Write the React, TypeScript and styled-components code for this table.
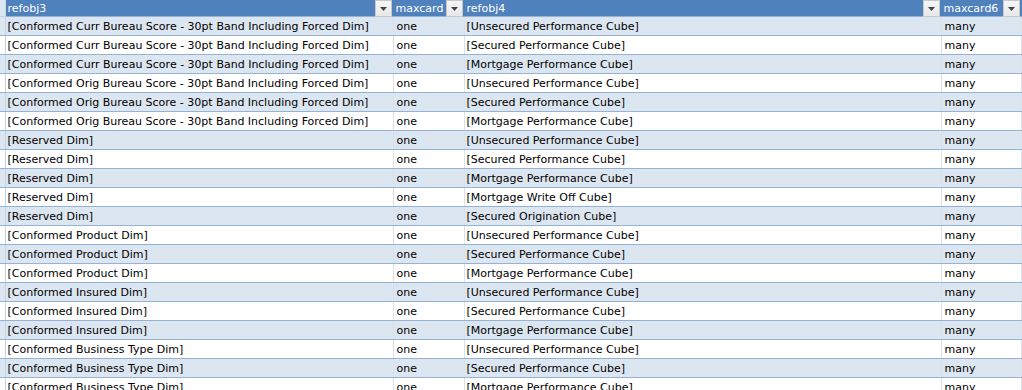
import styled, { createGlobalStyle } from 'styled-components';

const GlobalStyle = createGlobalStyle`
  html, body {
    margin: 0;
    padding: 0;
    background: #ffffff;
    overflow: hidden;
  }
`;

const rows: [string, string, string, string][] = [
  ['[Conformed Curr Bureau Score - 30pt Band Including Forced Dim]', 'one', '[Unsecured Performance Cube]', 'many'],
  ['[Conformed Curr Bureau Score - 30pt Band Including Forced Dim]', 'one', '[Secured Performance Cube]', 'many'],
  ['[Conformed Curr Bureau Score - 30pt Band Including Forced Dim]', 'one', '[Mortgage Performance Cube]', 'many'],
  ['[Conformed Orig Bureau Score - 30pt Band Including Forced Dim]', 'one', '[Unsecured Performance Cube]', 'many'],
  ['[Conformed Orig Bureau Score - 30pt Band Including Forced Dim]', 'one', '[Secured Performance Cube]', 'many'],
  ['[Conformed Orig Bureau Score - 30pt Band Including Forced Dim]', 'one', '[Mortgage Performance Cube]', 'many'],
  ['[Reserved Dim]', 'one', '[Unsecured Performance Cube]', 'many'],
  ['[Reserved Dim]', 'one', '[Secured Performance Cube]', 'many'],
  ['[Reserved Dim]', 'one', '[Mortgage Performance Cube]', 'many'],
  ['[Reserved Dim]', 'one', '[Mortgage Write Off Cube]', 'many'],
  ['[Reserved Dim]', 'one', '[Secured Origination Cube]', 'many'],
  ['[Conformed Product Dim]', 'one', '[Unsecured Performance Cube]', 'many'],
  ['[Conformed Product Dim]', 'one', '[Secured Performance Cube]', 'many'],
  ['[Conformed Product Dim]', 'one', '[Mortgage Performance Cube]', 'many'],
  ['[Conformed Insured Dim]', 'one', '[Unsecured Performance Cube]', 'many'],
  ['[Conformed Insured Dim]', 'one', '[Secured Performance Cube]', 'many'],
  ['[Conformed Insured Dim]', 'one', '[Mortgage Performance Cube]', 'many'],
  ['[Conformed Business Type Dim]', 'one', '[Unsecured Performance Cube]', 'many'],
  ['[Conformed Business Type Dim]', 'one', '[Secured Performance Cube]', 'many'],
  ['[Conformed Business Type Dim]', 'one', '[Mortgage Performance Cube]', 'many'],
];

const headers = ['refobj3', 'maxcard', 'refobj4', 'maxcard6'];
const widths = [388, 71, 477, 80];

export default function App() {
  return (
    <>
      <GlobalStyle />
      <Sheet>
        <colgroup>
          <col style={{ width: 5 }} />
          {widths.map((w, i) => (
            <col key={i} style={{ width: w }} />
          ))}
          <col />
        </colgroup>
        <thead>
          <tr>
            <Stub $header />
            {headers.map((h) => (
              <HeaderCell key={h}>
                <HeaderInner>
                  <HeaderText>{h}</HeaderText>
                  <FilterButton>
                    <svg width="7" height="4" viewBox="0 0 7 4">
                      <path d="M0 0H7L3.5 4Z" fill="#444" />
                    </svg>
                  </FilterButton>
                </HeaderInner>
              </HeaderCell>
            ))}
            <Stub $header />
          </tr>
        </thead>
        <tbody>
          {rows.map((r, i) => (
            <tr key={i}>
              <Stub $band={i % 2 === 0} />
              {r.map((c, j) => (
                <Cell key={j} $band={i % 2 === 0}>{c}</Cell>
              ))}
              <Stub $band={i % 2 === 0} />
            </tr>
          ))}
        </tbody>
      </Sheet>
    </>
  );
}

const Sheet = styled.table`
  border-collapse: collapse;
  table-layout: fixed;
  width: 1022px;
  font-family: 'DejaVu Sans', sans-serif;
  font-size: 11px;
  color: #000;
`;

const Stub = styled.td<{ $band?: boolean; $header?: boolean }>`
  padding: 0;
  height: ${(p) => (p.$header ? '16px' : '18px')};
  background: ${(p) => (p.$header ? '#dce6f1' : p.$band ? '#dce6f1' : '#ffffff')};
  border-right: 1px solid #c5d2e2;
  border-bottom: 1px solid ${(p) => (p.$header ? '#c5d2e2' : '#95b3d7')};
  &:last-child {
    border-right: none;
  }
`;

const HeaderCell = styled.th`
  padding: 0;
  height: 16px;
  background: #4f81bd;
  border-right: 1px solid #4f81bd;
  border-bottom: 1px solid #95b3d7;
  text-align: left;
  font-weight: normal;
`;

const HeaderInner = styled.div`
  display: flex;
  align-items: flex-start;
  justify-content: space-between;
  height: 16px;
`;

const HeaderText = styled.span`
  color: #ffffff;
  padding: 1px 0 0 2px;
  line-height: 15px;
  white-space: nowrap;
`;

const FilterButton = styled.span`
  display: flex;
  align-items: center;
  justify-content: center;
  width: 15px;
  height: 15px;
  margin-right: 1px;
  background: linear-gradient(#f6f6f6, #e8e8e8);
  border: 1px solid #c8c8c8;
`;

const Cell = styled.td<{ $band: boolean }>`
  padding: 2px 0 0 2px;
  height: 16px;
  line-height: 16px;
  white-space: nowrap;
  overflow: hidden;
  vertical-align: top;
  background: ${(p) => (p.$band ? '#dce6f1' : '#ffffff')};
  border-right: 1px solid #d9e1ea;
  border-bottom: 1px solid #95b3d7;
  &:nth-child(3), &:nth-child(5) {
    padding-left: 3px;
  }
`;
